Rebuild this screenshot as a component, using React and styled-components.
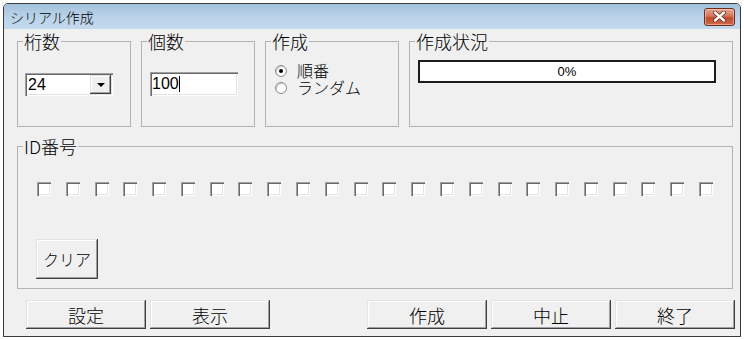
import React from 'react'
import styled, { createGlobalStyle } from 'styled-components'

const GlobalStyle = createGlobalStyle`
  body {
    margin: 0;
    background: #fff;
    font-family: "Noto Sans CJK JP", "Liberation Sans", sans-serif;
    color: #000;
  }
`

const Window = styled.div`
  margin: 3px 0 0 3px;
  width: 738px;
  height: 334px;
  box-sizing: border-box;
  border: 1px solid #3a3a3a;
  border-radius: 5px 5px 0 0;
  background: #f0f0f0;
  box-shadow: 0 2px 0 #5fa3cf;
  display: flex;
  flex-direction: column;
  overflow: hidden;
`

const TitleBar = styled.div`
  height: 25px;
  flex-shrink: 0;
  background: linear-gradient(#a4c2dc, #bcd5ea 60%, #c3daee);
  display: flex;
  align-items: center;
  justify-content: space-between;
  padding: 0 5px 0 6px;
  font-size: 14px;
  line-height: 14px;
  font-weight: 300;
  color: #000;
`

const CloseButton = styled.div`
  width: 31px;
  height: 18px;
  box-sizing: border-box;
  border: 1px solid #6e2c1f;
  border-radius: 3px;
  background: linear-gradient(#e7a894, #d2735a 45%, #c04a2e 55%, #cf6a4c);
  box-shadow: inset 0 0 0 1px rgba(255, 220, 200, 0.5);
  display: flex;
  align-items: center;
  justify-content: center;
`

const Body = styled.div`
  flex: 1;
  padding: 3px 5px 0 13px;
  display: flex;
  flex-direction: column;
`

const TopRow = styled.div`
  display: flex;
  gap: 10px;
`

// group box: legend sits 5px in from the border, content is indented by $indent
const Group = styled.fieldset`
  margin: 0;
  padding: 0 0 0 ${p => p.$indent || 0}px;
  width: ${p => p.$w}px;
  height: ${p => p.$h}px;
  box-sizing: border-box;
  border: 1px solid #b3b3b3;
  min-inline-size: 0;
  & > legend {
    margin-left: ${p => 5 - (p.$indent || 0)}px;
  }
`

const Legend = styled.legend`
  font-size: 18px;
  line-height: 18px;
  font-weight: 300;
  padding: 0 1px;
`

const Combo = styled.div`
  margin-top: 23px;
  width: 88px;
  height: 23px;
  box-sizing: border-box;
  background: #fff;
  box-shadow: inset 1px 1px #a0a0a0, inset 2px 2px #696969, inset -1px -1px #fff, inset -2px -2px #e3e3e3;
  display: flex;
  align-items: center;
  justify-content: space-between;
  padding: 2px 2px 2px 3px;
  font-family: "Liberation Sans", sans-serif;
  font-size: 16px;
`

const DropButton = styled.div`
  width: 21px;
  height: 19px;
  box-sizing: border-box;
  background: #f0f0f0;
  box-shadow: inset -1px -1px #404040, inset 1px 1px #e3e3e3, inset -2px -2px #a0a0a0, inset 2px 2px #fff;
  display: flex;
  align-items: center;
  justify-content: center;
  &::after {
    content: '';
    border-left: 4px solid transparent;
    border-right: 4px solid transparent;
    border-top: 4px solid #000;
  }
`

const TextBox = styled.div`
  margin-top: 22px;
  width: 88px;
  height: 24px;
  box-sizing: border-box;
  background: #fff;
  box-shadow: inset 1px 1px #a0a0a0, inset 2px 2px #696969, inset -1px -1px #fff, inset -2px -2px #e3e3e3;
  display: flex;
  align-items: center;
  padding-left: 2px;
  font-family: "Liberation Sans", sans-serif;
  font-size: 16px;
`

const Caret = styled.span`
  width: 1px;
  height: 16px;
  background: #000;
`

const RadioList = styled.div`
  padding-top: 12px;
  display: flex;
  flex-direction: column;
`

const RadioRow = styled.div`
  display: flex;
  align-items: center;
  height: 17px;
  font-size: 16px;
  line-height: 17px;
  font-weight: 300;
  overflow: visible;
`

const RadioDot = styled.span`
  width: 12px;
  height: 12px;
  box-sizing: border-box;
  border-radius: 50%;
  border: 1px solid #8a8a8a;
  background: #fff;
  box-shadow: inset 1px 1px 1px #c8c8c8;
  margin-right: 10px;
  display: flex;
  align-items: center;
  justify-content: center;
  &::after {
    content: '';
    width: 4px;
    height: 4px;
    border-radius: 50%;
    background: ${p => (p.$checked ? '#000' : 'transparent')};
  }
`

const Progress = styled.div`
  margin-top: 10px;
  width: 298px;
  height: 23px;
  box-sizing: border-box;
  border: 2px solid #1c1c1c;
  background: #fff;
  display: flex;
  align-items: center;
  justify-content: center;
  font-family: "Liberation Sans", sans-serif;
  font-size: 13px;
`

const IdGroup = styled(Group)`
  margin-top: 10px;
`

const CheckRow = styled.div`
  margin-top: 27px;
  width: 676px;
  display: flex;
  justify-content: space-between;
`

const CheckBox = styled.span`
  width: 14px;
  height: 14px;
  box-sizing: border-box;
  background: #fff;
  box-shadow: inset 1px 1px #a0a0a0, inset 2px 2px #696969, inset -1px -1px #fff, inset -2px -2px #e3e3e3;
`

const Button = styled.button`
  width: ${p => p.$w || 120}px;
  height: ${p => p.$h || 29}px;
  margin: 0;
  padding: 0;
  border: none;
  background: #f0f0f0;
  box-shadow: inset -1px -1px #404040, inset 1px 1px #e3e3e3, inset -2px -2px #a0a0a0, inset 2px 2px #fff;
  font-family: "Noto Sans CJK JP", sans-serif;
  font-size: ${p => p.$fs || 18}px;
  font-weight: 300;
  line-height: 1;
  color: #000;
  display: flex;
  align-items: center;
  justify-content: center;
`

const ClearButton = styled(Button)`
  margin: 43px 0 0 -1px;
`

const BottomRow = styled.div`
  margin-top: 11px;
  padding-left: 9px;
  display: flex;
  justify-content: space-between;
`

const ButtonGroup = styled.div`
  display: flex;
  gap: 4px;
`

export default function App() {
  const boxes = Array.from({ length: 24 })
  return (
    <>
      <GlobalStyle />
      <Window>
        <TitleBar>
          <span>シリアル作成</span>
          <CloseButton>
            <svg width="13" height="11" viewBox="0 0 13 11">
              <path d="M2 1.5 L11 9.5 M11 1.5 L2 9.5" stroke="#6a2a1c" strokeWidth="4" strokeLinecap="round" />
              <path d="M2 1.5 L11 9.5 M11 1.5 L2 9.5" stroke="#fff" strokeWidth="2.4" strokeLinecap="round" />
            </svg>
          </CloseButton>
        </TitleBar>
        <Body>
          <TopRow>
            <Group $w={114} $h={95} $indent={7}>
              <Legend>桁数</Legend>
              <Combo>
                <span>24</span>
                <DropButton />
              </Combo>
            </Group>
            <Group $w={114} $h={95} $indent={8}>
              <Legend>個数</Legend>
              <TextBox>
                100<Caret />
              </TextBox>
            </Group>
            <Group $w={134} $h={95} $indent={9}>
              <Legend>作成</Legend>
              <RadioList>
                <RadioRow><RadioDot $checked />順番</RadioRow>
                <RadioRow><RadioDot />ランダム</RadioRow>
              </RadioList>
            </Group>
            <Group $w={324} $h={95} $indent={8}>
              <Legend>作成状況</Legend>
              <Progress>0%</Progress>
            </Group>
          </TopRow>
          <IdGroup $w={716} $h={152} $indent={19}>
            <Legend>ID番号</Legend>
            <CheckRow>
              {boxes.map((_, i) => <CheckBox key={i} />)}
            </CheckRow>
            <ClearButton $w={62} $h={40} $fs={16}>クリア</ClearButton>
          </IdGroup>
          <BottomRow>
            <ButtonGroup>
              <Button>設定</Button>
              <Button>表示</Button>
            </ButtonGroup>
            <ButtonGroup>
              <Button>作成</Button>
              <Button>中止</Button>
              <Button>終了</Button>
            </ButtonGroup>
          </BottomRow>
        </Body>
      </Window>
    </>
  )
}
